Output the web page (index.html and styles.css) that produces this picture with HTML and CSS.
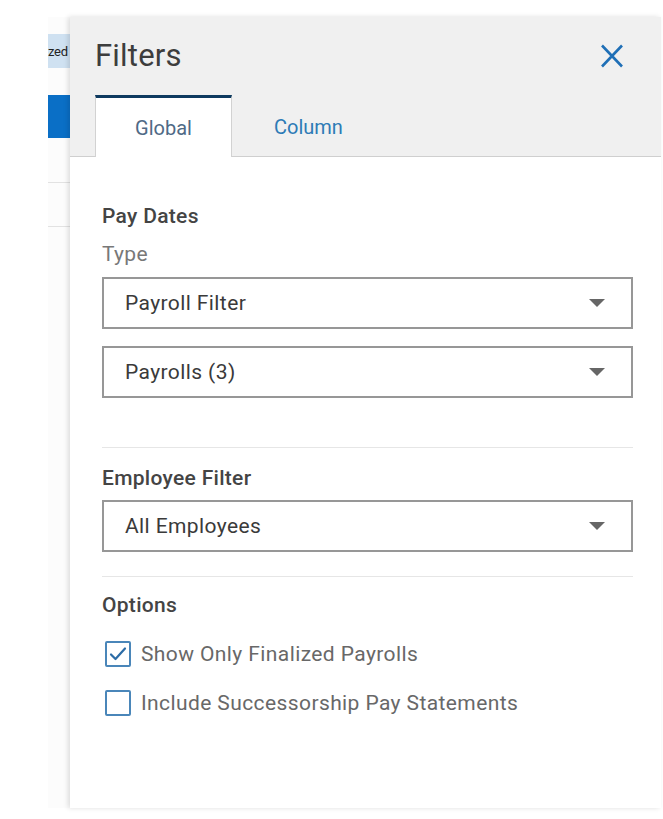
FILE: index.html
```html
<!DOCTYPE html>
<html lang="en">
<head>
<meta charset="utf-8">
<title>Filters</title>
<link rel="stylesheet" href="styles.css">
</head>
<body>
<div class="page">
  <div class="behind">
    <div class="behind-tag"><span>zed</span></div>
    <div class="behind-btn"></div>
    <div class="behind-line first"></div>
    <div class="behind-line"></div>
  </div>
  <aside class="panel">
    <header class="panel-head">
      <div class="title-row">
        <h1 class="title">Filters</h1>
        <button class="close" aria-label="Close">
          <svg width="24" height="24" viewBox="0 0 24 24"><path d="M2 1.5 L22 22.5 M22 1.5 L2 22.5" stroke="#1f6fb6" stroke-width="2.6" fill="none"/></svg>
        </button>
      </div>
      <div class="tabs">
        <div class="tab active">Global</div>
        <div class="tab">Column</div>
      </div>
    </header>
    <div class="panel-body">
      <div class="section pay">
        <div class="label strong">Pay Dates</div>
        <div class="label sub">Type</div>
        <div class="select first"><span>Payroll Filter</span><i class="caret"></i></div>
        <div class="select second"><span>Payrolls (3)</span><i class="caret"></i></div>
      </div>
      <div class="divider d1"></div>
      <div class="section emp">
        <div class="label strong">Employee Filter</div>
        <div class="select third"><span>All Employees</span><i class="caret"></i></div>
      </div>
      <div class="divider d2"></div>
      <div class="section opts">
        <div class="label strong">Options</div>
        <div class="check-row first">
          <span class="box checked">
            <svg width="22" height="22" viewBox="0 0 22 22"><path d="M4 11.5 L8.5 16 L18 5.5" stroke="#2c6ca6" stroke-width="2.2" fill="none" stroke-linecap="round" stroke-linejoin="round"/></svg>
          </span>
          <span class="check-text">Show Only Finalized Payrolls</span>
        </div>
        <div class="check-row">
          <span class="box"></span>
          <span class="check-text">Include Successorship Pay Statements</span>
        </div>
      </div>
    </div>
  </aside>
</div>
</body>
</html>
```

FILE: styles.css
```css
* { box-sizing: border-box; }
html, body { margin: 0; padding: 0; background: #fff; }
body { font-family: Roboto, "Liberation Sans", sans-serif; width: 663px; height: 819px; overflow: hidden; }

.page { display: flex; align-items: flex-start; }

.behind {
  width: 22px;
  margin-left: 48px;
  height: 791px;
  margin-top: 17px;
  background: #fcfcfc;
  display: flex;
  flex-direction: column;
  overflow: hidden;
}
.behind-tag {
  margin-top: 17px;
  height: 34px;
  background: #cfe1f1;
  display: flex;
  align-items: center;
  font-size: 13px;
  letter-spacing: -0.3px;
  color: #222;
  white-space: nowrap;
}
.behind-btn { margin-top: 27px; height: 43px; background: #0a6fc6; }
.behind-line { height: 1px; background: #e2e2e2; margin-top: 43px; }
.behind-line.first { margin-top: 44px; }

.panel {
  width: 591px;
  height: 791px;
  margin-top: 17px;
  background: #fff;
  box-shadow: -2px 0 5px rgba(0,0,0,0.13);
  display: flex;
  flex-direction: column;
}

.panel-head {
  background: #f0f0f0;
  padding: 21px 0 0 25px;
  border-bottom: 1px solid #cfcfcf;
}
.title-row { display: flex; justify-content: space-between; align-items: center; height: 36px; }
.title { margin: 0; font-size: 31px; line-height: 38px; font-weight: 400; color: #3d3d3d; letter-spacing: 0.2px; }
.close { border: 0; background: none; padding: 0; margin-right: 37px; width: 24px; height: 24px; display: flex; }

.tabs { display: flex; margin-top: 21px; height: 61px; }
.tab {
  padding: 0 40px 0 41px;
  font-size: 20px;
  color: #2d7bb6;
  display: flex;
  align-items: center;
  border: 1px solid transparent;
  border-top-width: 3px;
}
.tab.active {
  width: 137px;
  justify-content: center;
  padding: 0;
  background: #fff;
  color: #4f6a86;
  border-color: #0e3a5f #d2d2d2 #fff #d2d2d2;
  border-bottom: 0;
  height: 62px;
  margin-bottom: -1px;
}

.panel-body { padding: 0 28px 0 32px; }

.label { font-size: 21px; line-height: 24px; letter-spacing: 0.3px; }
.label.strong { font-weight: 500; color: #444; }
.label.sub { color: #787878; margin-top: 14px; font-weight: 400; }

.section.pay { padding-top: 47px; }

.select {
  height: 52px;
  border: 2px solid #979797;
  display: flex;
  align-items: center;
  justify-content: space-between;
  padding: 0 26px 0 21px;
  font-size: 21px;
  letter-spacing: 0.4px;
  color: #3a3a3a;
}
.select.first { margin-top: 11px; }
.select.second { margin-top: 17px; }
.select.third { margin-top: 10px; }
.caret {
  width: 0; height: 0;
  border-left: 8px solid transparent;
  border-right: 8px solid transparent;
  border-top: 8px solid #666;
}

.divider { height: 1px; background: #e6e6e6; }
.divider.d1 { margin-top: 49px; }
.divider.d2 { margin-top: 24px; }

.section.emp { padding-top: 18px; }
.section.opts { padding-top: 16px; }

.check-row { display: flex; align-items: center; height: 26px; margin-top: 23px; margin-left: 3px; }
.check-row.first { margin-top: 24px; }
.box {
  width: 26px; height: 26px;
  border: 2px solid #4a86b9;
  border-radius: 2px;
  display: flex; align-items: center; justify-content: center;
  flex: none;
}
.check-text { margin-left: 10px; font-size: 21px; letter-spacing: 0.4px; color: #686868; }
```
